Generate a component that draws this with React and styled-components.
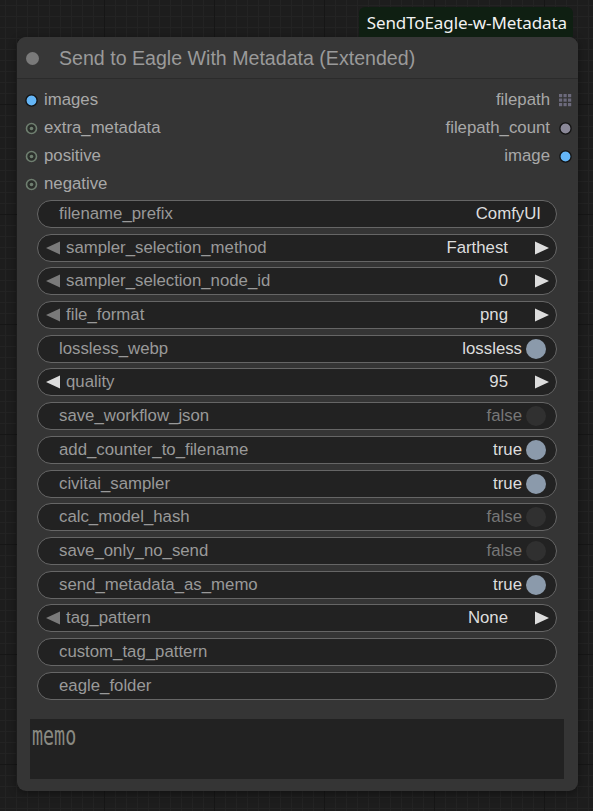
import React from "react";
import styled, { createGlobalStyle } from "styled-components";

const GlobalStyle = createGlobalStyle`
  html, body {
    margin: 0;
    padding: 0;
    background: #1d1d1d;
  }
  * {
    box-sizing: border-box;
  }
`;

const inputs = [
  { name: "images", kind: "image" },
  { name: "extra_metadata", kind: "ring" },
  { name: "positive", kind: "ring" },
  { name: "negative", kind: "ring" },
];

const outputs = [
  { name: "filepath", kind: "list" },
  { name: "filepath_count", kind: "int" },
  { name: "image", kind: "image" },
];

const widgets = [
  { type: "text", label: "filename_prefix", value: "ComfyUI" },
  { type: "combo", label: "sampler_selection_method", value: "Farthest" },
  { type: "combo", label: "sampler_selection_node_id", value: "0" },
  { type: "combo", label: "file_format", value: "png" },
  { type: "toggle", label: "lossless_webp", value: "lossless", on: true },
  { type: "combo", label: "quality", value: "95", leftActive: true },
  { type: "toggle", label: "save_workflow_json", value: "false", on: false },
  { type: "toggle", label: "add_counter_to_filename", value: "true", on: true },
  { type: "toggle", label: "civitai_sampler", value: "true", on: true },
  { type: "toggle", label: "calc_model_hash", value: "false", on: false },
  { type: "toggle", label: "save_only_no_send", value: "false", on: false },
  { type: "toggle", label: "send_metadata_as_memo", value: "true", on: true },
  { type: "combo", label: "tag_pattern", value: "None" },
  { type: "text", label: "custom_tag_pattern", value: "" },
  { type: "text", label: "eagle_folder", value: "" },
];

// slot glyphs
const SlotDot = ({ kind }) => {
  if (kind === "list") {
    return (
      <svg width="13" height="13" viewBox="0 0 13 13">
        {[0, 4.5, 9].map((y) =>
          [0, 4.5, 9].map((x) => <rect key={`${x}-${y}`} x={x} y={y} width="3.2" height="3.2" fill="#6c6a7c" />)
        )}
      </svg>
    );
  }
  if (kind === "ring") {
    return (
      <svg width="13" height="13" viewBox="0 0 13 13">
        <circle cx="6.5" cy="6.5" r="5" fill="#2b2f2b" stroke="#6f7f70" strokeWidth="1.6" />
        <circle cx="6.5" cy="6.5" r="1.8" fill="#6f7f70" />
      </svg>
    );
  }
  const fill = kind === "int" ? "#8a8898" : "#64b5f6";
  return (
    <svg width="13" height="13" viewBox="0 0 13 13">
      <circle cx="6.5" cy="6.5" r="5.6" fill={fill} stroke="#111" strokeWidth="1.3" />
    </svg>
  );
};

const Triangle = ({ dir, active }) => (
  <ArrowBox $right={dir === "right"}>
    <svg width="14" height="14" viewBox="0 0 14 14">
      <polygon
        points={dir === "right" ? "0,0.5 14,7 0,13.5" : "14,0.5 14,13.5 0,7"}
        fill={active ? "#dddddd" : "#7a7a7a"}
      />
    </svg>
  </ArrowBox>
);

const App = () => {
  return (
    <>
      <GlobalStyle />
      <Canvas>
        <BadgeRow>
          <Badge>SendToEagle-w-Metadata</Badge>
        </BadgeRow>
        <Node>
          <TitleBar>
            <TitleDot />
            <Title>Send to Eagle With Metadata (Extended)</Title>
          </TitleBar>
          <Slots>
            <SlotColumn>
              {inputs.map((s) => (
                <SlotRow key={s.name}>
                  <SlotDot kind={s.kind} />
                  <SlotLabel>{s.name}</SlotLabel>
                </SlotRow>
              ))}
            </SlotColumn>
            <SlotColumn $right>
              {outputs.map((s) => (
                <SlotRow key={s.name} $right>
                  <SlotLabel>{s.name}</SlotLabel>
                  <SlotDot kind={s.kind} />
                </SlotRow>
              ))}
            </SlotColumn>
          </Slots>
          <Widgets>
            {widgets.map((w) => (
              <Widget key={w.label}>
                {w.type === "combo" && <Triangle dir="left" active={w.leftActive} />}
                <WidgetLabel $arrow={w.type === "combo"}>{w.label}</WidgetLabel>
                <WidgetValue $muted={w.type === "toggle" && !w.on}>{w.value}</WidgetValue>
                {w.type === "combo" && <Triangle dir="right" active />}
                {w.type === "toggle" && <Knob $on={w.on} />}
                {w.type === "text" && <TextPad />}
              </Widget>
            ))}
          </Widgets>
          <Memo>
            <MemoText>memo</MemoText>
          </Memo>
        </Node>
      </Canvas>
    </>
  );
};

export default App;

const Canvas = styled.div`
  width: 593px;
  height: 811px;
  padding: 7px 0 0 17px;
  overflow: hidden;
  background-color: #1d1d1d;
  background-image: linear-gradient(#161616 1px, transparent 1px),
    linear-gradient(90deg, #161616 1px, transparent 1px),
    linear-gradient(#232323 1px, transparent 1px),
    linear-gradient(90deg, #232323 1px, transparent 1px);
  background-size: 110px 110px, 110px 110px, 11px 11px, 11px 11px;
  background-position: -6px -6px;
  font-family: "Liberation Sans", Arial, sans-serif;
`;

const BadgeRow = styled.div`
  display: flex;
  justify-content: flex-end;
  width: 561px;
  padding-right: 5px;
`;

const Badge = styled.div`
  height: 30px;
  padding: 0 6px 0 8px;
  display: flex;
  align-items: center;
  background: #0f1f12;
  border-radius: 6px 6px 0 0;
  color: #f2f2f2;
  font-family: "Noto Sans", "Open Sans", sans-serif;
  font-size: 17px;
  letter-spacing: -0.1px;
`;

const Node = styled.div`
  width: 561px;
  background: #353535;
  border-radius: 9px;
  box-shadow: 0 2px 8px rgba(0, 0, 0, 0.4);
  padding-bottom: 12px;
`;

const TitleBar = styled.div`
  height: 42px;
  display: flex;
  align-items: center;
  gap: 20px;
  padding: 1px 0 0 9px;
  background: #373737;
  border-radius: 9px 9px 0 0;
  border-bottom: 1px solid #2b2b2b;
`;

const TitleDot = styled.div`
  width: 13px;
  height: 13px;
  border-radius: 50%;
  background: #7a7a7a;
`;

const Title = styled.div`
  color: #9a9a9a;
  font-size: 19.6px;
`;

const Slots = styled.div`
  display: flex;
  justify-content: space-between;
  padding: 7px 6px 0 8px;
`;

const SlotColumn = styled.div`
  display: flex;
  flex-direction: column;
  align-items: ${(p) => (p.$right ? "flex-end" : "flex-start")};
`;

const SlotRow = styled.div`
  height: 28px;
  display: flex;
  align-items: center;
  gap: ${(p) => (p.$right ? "9px" : "6px")};
`;

const SlotLabel = styled.span`
  color: #a8a8a8;
  font-size: 16.8px;
`;

const Widgets = styled.div`
  display: flex;
  flex-direction: column;
  gap: 5.7px;
  padding: 2px 21px 0 20px;
`;

const Widget = styled.div`
  height: 28px;
  display: flex;
  align-items: center;
  background: #222;
  border: 1px solid #666;
  border-radius: 14px;
  padding: 0 7px 0 8px;
  font-size: 16.8px;
`;

const ArrowBox = styled.span`
  display: flex;
  align-items: center;
  margin-left: ${(p) => (p.$right ? "27px" : "0")};
`;

const WidgetLabel = styled.span`
  flex: 1;
  margin-left: ${(p) => (p.$arrow ? "6px" : "13px")};
  color: #999;
  white-space: nowrap;
`;

const WidgetValue = styled.span`
  color: ${(p) => (p.$muted ? "#777" : "#dddddd")};
  white-space: nowrap;
`;

const Knob = styled.span`
  width: 20px;
  height: 20px;
  margin-left: 4px;
  margin-right: 3px;
  border-radius: 50%;
  background: ${(p) => (p.$on ? "#8b9aab" : "#303030")};
`;

const TextPad = styled.span`
  width: 8px;
`;

const Memo = styled.div`
  height: 60px;
  margin: 19px 14px 0 13px;
  background: #222;
  padding: 3px 0 0 2px;
  overflow: hidden;
`;

const MemoText = styled.span`
  display: inline-block;
  color: #8a8a82;
  font-family: "DejaVu Sans Mono", "Liberation Mono", monospace;
  font-size: 27px;
  line-height: 27px;
  transform: scaleX(0.68);
  transform-origin: left top;
`;
